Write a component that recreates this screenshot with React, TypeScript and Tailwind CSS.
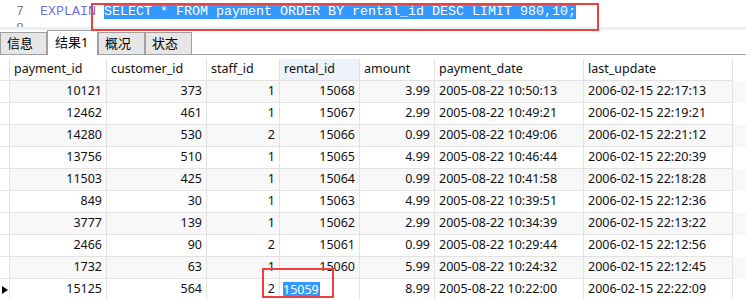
import React from 'react';

const cols = [
  { key: 'payment_id', w: 'w-[97px]', right: true },
  { key: 'customer_id', w: 'w-[100px]', right: true },
  { key: 'staff_id', w: 'w-[73px]', right: true },
  { key: 'rental_id', w: 'w-[80px]', right: true },
  { key: 'amount', w: 'w-[75px]', right: true },
  { key: 'payment_date', w: 'w-[149px]', right: false },
  { key: 'last_update', w: 'w-[149px]', right: false },
];

const rows: string[][] = [
  ['10121', '373', '1', '15068', '3.99', '2005-08-22 10:50:13', '2006-02-15 22:17:13'],
  ['12462', '461', '1', '15067', '2.99', '2005-08-22 10:49:21', '2006-02-15 22:19:21'],
  ['14280', '530', '2', '15066', '0.99', '2005-08-22 10:49:06', '2006-02-15 22:21:12'],
  ['13756', '510', '1', '15065', '4.99', '2005-08-22 10:46:44', '2006-02-15 22:20:39'],
  ['11503', '425', '1', '15064', '0.99', '2005-08-22 10:41:58', '2006-02-15 22:18:28'],
  ['849', '30', '1', '15063', '4.99', '2005-08-22 10:39:51', '2006-02-15 22:12:36'],
  ['3777', '139', '1', '15062', '2.99', '2005-08-22 10:34:39', '2006-02-15 22:13:22'],
  ['2466', '90', '2', '15061', '0.99', '2005-08-22 10:29:44', '2006-02-15 22:12:56'],
  ['1732', '63', '1', '15060', '5.99', '2005-08-22 10:24:32', '2006-02-15 22:12:45'],
  ['15125', '564', '2', '15059', '8.99', '2005-08-22 10:22:00', '2006-02-15 22:22:09'],
];

const tabs = ['信息', '结果1', '概况', '状态'];

const Tabs: React.FC = () => (
  <div className="flex items-end h-[25px] border-b border-[#a0a0a0] mt-[0px]">
    {tabs.map((t, i) =>
      i === 1 ? (
        <div
          key={t}
          className="w-[51px] h-[25px] -mb-px bg-white border-x border-t border-[#a0a0a0] flex items-center pl-[7px] text-[13px] text-black"
        >
          {t}
        </div>
      ) : (
        <div
          key={t}
          className="w-[47px] h-[22px] bg-[#e6e6e6] border-x border-t border-[#a0a0a0] flex items-center pl-[6px] text-[13px] text-black"
        >
          {t}
        </div>
      )
    )}
  </div>
);

const Editor: React.FC = () => (
  <div className="relative">
    <div className="h-[27px] overflow-hidden font-['Liberation_Mono',monospace] text-[13.33px] leading-[17px] pt-[3px]">
      <div className="flex">
        <div className="w-[24px] text-right text-[#808080]">7</div>
        <div className="pl-[16px] whitespace-pre">
          <span className="text-[#7272e8]">EXPLAIN </span>
          <span className="bg-[#3399ff] text-white">SELECT * FROM payment ORDER BY rental_id DESC LIMIT 980,10;</span>
        </div>
      </div>
      <div className="flex">
        <div className="w-[24px] text-right text-[#808080]">8</div>
      </div>
    </div>
    <div className="h-[3px] bg-[#efefef]" />
    <div className="absolute left-[91px] top-[3px] w-[508px] h-[28px] border-2 border-[#ee4040]" />
  </div>
);

const Grid: React.FC = () => (
  <div className="mt-[4px] text-[12.5px] text-[#111] font-['Noto_Sans','Noto_Sans_CJK_SC',sans-serif] relative">
    <div className="flex h-[22px]">
      <div className="w-[10px] border-r border-b border-[#e2e2e2]" />
      {cols.map((c) => (
        <div
          key={c.key}
          className={`${c.w} border-r border-b border-[#e2e2e2] flex items-center pl-[4px] ${
            c.key === 'rental_id' ? 'bg-[#eef3fb]' : 'bg-white'
          }`}
        >
          {c.key}
        </div>
      ))}
    </div>
    {rows.map((r, ri) => (
      <div key={ri} className={`flex h-[22px] ${ri % 2 === 0 ? 'bg-[#f8f8f8]' : 'bg-white'}`}>
        <div className="w-[10px] border-r border-b border-[#e2e2e2] bg-white flex items-center">
          {ri === 9 && (
            <svg width="8" height="10" viewBox="0 0 8 10" className="ml-[1px]">
              <polygon points="1,1 7,5 1,9" fill="#000" />
            </svg>
          )}
        </div>
        {r.map((v, ci) => {
          const c = cols[ci];
          const editing = ri === 9 && ci === 3;
          return (
            <div
              key={ci}
              className={`${c.w} border-r border-b border-[#e2e2e2] flex items-center ${
                editing ? 'pl-[3px] bg-white' : c.right ? 'justify-end pr-[4px]' : 'pl-[4px]'
              }`}
            >
              {editing ? (
                <span className="bg-[#3399ff] text-white leading-[15px] border-r border-[#c07020]">{v}</span>
              ) : (
                v
              )}
            </div>
          );
        })}
      </div>
    ))}
    <div className="absolute left-[262px] top-[209px] w-[72px] h-[30px] border-2 border-[#ee4040]" />
  </div>
);

export default function App() {
  return (
    <div className="w-[746px] h-[299px] bg-white overflow-hidden font-['Noto_Sans','Noto_Sans_CJK_SC',sans-serif]">
      <Editor />
      <Tabs />
      <Grid />
    </div>
  );
}
